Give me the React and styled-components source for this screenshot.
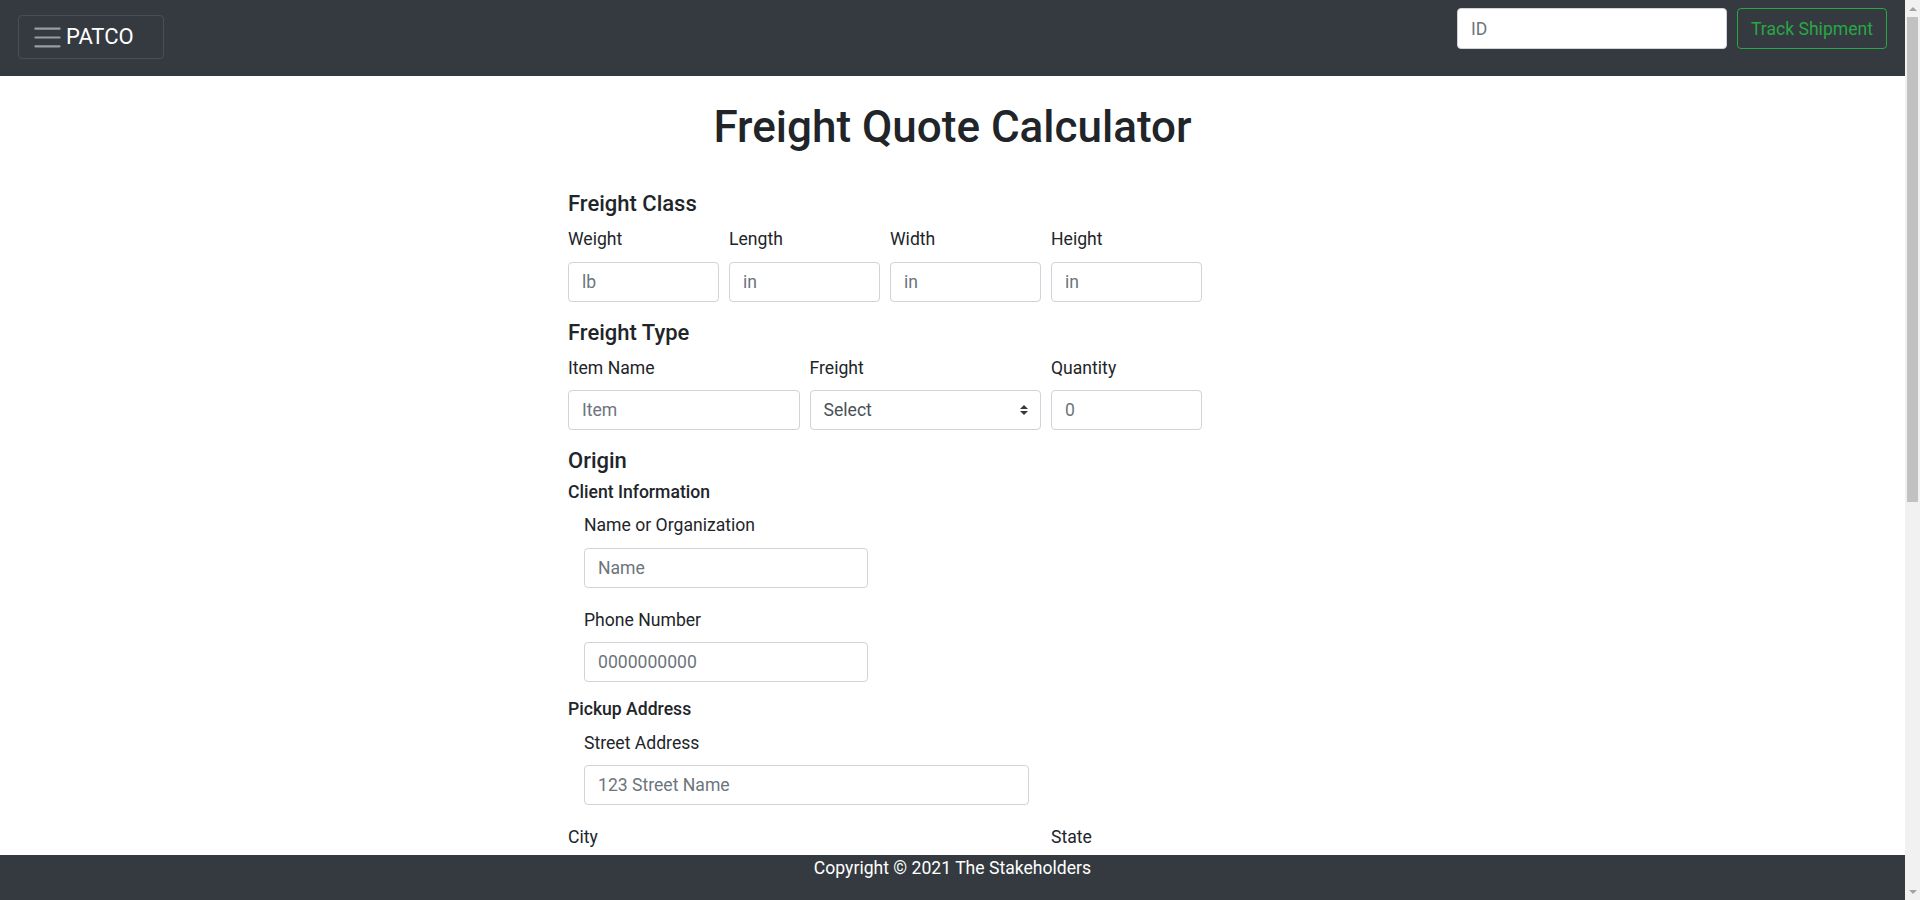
import React from 'react'
import styled, { createGlobalStyle } from 'styled-components'

const GlobalStyle = createGlobalStyle`
  body {
    margin: 0;
    font-family: Roboto, "Liberation Sans", sans-serif;
    font-size: 17.6px;
    line-height: 1.5;
    color: #212529;
    background: #fff;
  }
  * { box-sizing: border-box; }
`

const Shell = styled.div`
  display: flex;
  height: 100vh;
  overflow: hidden;
`

// the page scrolls inside this box, the rail beside it shows the bar
const Page = styled.div`
  flex: 1;
  display: flex;
  flex-direction: column;
  overflow-y: auto;
  scrollbar-width: none;
`

const ScrollRail = styled.div`
  display: flex;
  flex-direction: column;
  flex-shrink: 0;
  width: 15px;
  background: #f1f1f1;
`

const RailArrow = styled.div`
  display: flex;
  align-items: center;
  justify-content: center;
  height: 17px;
`

const RailTrack = styled.div`
  flex: 1;
  padding: 0 2px;
`

const Thumb = styled.div`
  height: 485px;
  background: #c1c1c1;
`

const NavBar = styled.header`
  display: flex;
  flex-shrink: 0;
  justify-content: space-between;
  align-items: flex-start;
  height: 76px;
  padding: 0 18px;
  background: #343a40;
`

const Toggler = styled.button`
  display: flex;
  align-items: center;
  margin-top: 15px;
  height: 44px;
  padding: 0 29px 0 12px;
  background: transparent;
  border: 1px solid rgba(255, 255, 255, 0.1);
  border-radius: 4px;
  color: #fff;
  font-family: inherit;
  font-size: 22px;
  line-height: 1;
  cursor: pointer;

  svg {
    margin-right: 2px;
  }
`

const TrackForm = styled.form`
  display: flex;
  gap: 10px;
  margin-top: 8px;
`

const Input = styled.input`
  display: block;
  width: ${p => p.$width || '100%'};
  height: ${p => p.$height || '40px'};
  padding: 0 13px;
  border: 1px solid #ced4da;
  border-radius: 4px;
  background: #fff;
  font-family: inherit;
  font-size: 17.6px;
  color: #495057;

  &::placeholder {
    color: #6c757d;
  }
`

const OutlineButton = styled.button`
  height: 41px;
  padding: 0 13px;
  background: transparent;
  border: 1px solid #28a745;
  border-radius: 4px;
  color: #28a745;
  font-family: inherit;
  font-size: 17.6px;
  cursor: pointer;
`

const Main = styled.main`
  flex: 1 0 auto;
  padding: 25px 0 30px;
`

const Title = styled.h1`
  margin: 0 0 37px;
  font-size: 44px;
  font-weight: 500;
  line-height: 1.2;
  text-align: center;
`

const Form = styled.form`
  width: 634px;
  margin-left: 568px;
`

const SectionTitle = styled.h5`
  margin: 0 0 9px;
  font-size: 22px;
  font-weight: 500;
  line-height: 1.2;
`

const SubTitle = styled.h6`
  margin: 0 0 11px;
  font-size: 17.6px;
  font-weight: 500;
  line-height: 1;
`

const Row = styled.div`
  display: grid;
  grid-template-columns: ${p => p.$cols};
  column-gap: 10px;
`

const Group = styled.div`
  margin-bottom: ${p => (p.$indent ? '19px' : '18px')};
  padding-left: ${p => (p.$indent ? '16px' : '0')};
`

const Label = styled.label`
  display: block;
  margin-bottom: 9px;
`

const SelectWrap = styled.div`
  position: relative;

  svg {
    position: absolute;
    right: 13px;
    top: 15px;
    pointer-events: none;
  }
`

const Select = styled.select`
  display: block;
  width: 100%;
  height: 40px;
  padding: 0 13px;
  border: 1px solid #ced4da;
  border-radius: 4px;
  background: #fff;
  font-family: inherit;
  font-size: 17.6px;
  color: #495057;
  appearance: none;
`

const SubmitButton = styled.button`
  height: 40px;
  padding: 0 14px;
  background: #007bff;
  border: 1px solid #007bff;
  border-radius: 4px;
  color: #fff;
  font-family: inherit;
  font-size: 17.6px;
`

const Footer = styled.footer`
  position: sticky;
  bottom: 0;
  flex-shrink: 0;
  height: 45px;
  background: #343a40;
  color: #fff;
  text-align: center;
`

const Hamburger = () => (
  <svg width="33" height="33" viewBox="0 0 30 30">
    <path
      d="M4 7h22M4 15h22M4 23h22"
      stroke="rgba(255,255,255,0.5)"
      strokeWidth="2"
      strokeLinecap="round"
    />
  </svg>
)

const Arrows = () => (
  <svg width="8" height="10" viewBox="0 0 4 5">
    <path d="M2 0L0 2h4zm0 5L0 3h4z" fill="#343a40" />
  </svg>
)

const Triangle = ({ down }) => (
  <svg width="8" height="4" viewBox="0 0 8 4">
    <path d={down ? 'M0 0h8L4 4z' : 'M4 0l4 4H0z'} fill="#a3a3a3" />
  </svg>
)

const Field = ({ label, placeholder, width, indent }) => (
  <Group $indent={indent}>
    <Label>{label}</Label>
    <Input placeholder={placeholder} $width={width} />
  </Group>
)

const SelectField = ({ label }) => (
  <Group>
    <Label>{label}</Label>
    <SelectWrap>
      <Select defaultValue="">
        <option value="">Select</option>
      </Select>
      <Arrows />
    </SelectWrap>
  </Group>
)

// same block for pickup and delivery side
const Party = ({ title, addressTitle }) => (
  <>
    <SectionTitle>{title}</SectionTitle>
    <SubTitle>Client Information</SubTitle>
    <Field indent label="Name or Organization" placeholder="Name" width="284px" />
    <Field indent label="Phone Number" placeholder="0000000000" width="284px" />
    <SubTitle>{addressTitle}</SubTitle>
    <Field indent label="Street Address" placeholder="123 Street Name" width="445px" />
    <Row $cols="1fr 151px">
      <Field label="City" placeholder="City" />
      <SelectField label="State" />
    </Row>
    <Row $cols="151px">
      <Field label="Zip Code" placeholder="00000" />
    </Row>
  </>
)

export default function App() {
  return (
    <>
      <GlobalStyle />
      <Shell>
        <Page>
          <NavBar>
            <Toggler type="button">
              <Hamburger />
              PATCO
            </Toggler>
            <TrackForm onSubmit={e => e.preventDefault()}>
              <Input placeholder="ID" $width="270px" $height="41px" />
              <OutlineButton type="submit">Track Shipment</OutlineButton>
            </TrackForm>
          </NavBar>

          <Main>
            <Title>Freight Quote Calculator</Title>
            <Form onSubmit={e => e.preventDefault()}>
              <SectionTitle>Freight Class</SectionTitle>
              <Row $cols="repeat(4, 1fr)">
                <Field label="Weight" placeholder="lb" />
                <Field label="Length" placeholder="in" />
                <Field label="Width" placeholder="in" />
                <Field label="Height" placeholder="in" />
              </Row>

              <SectionTitle>Freight Type</SectionTitle>
              <Row $cols="1fr 1fr 151px">
                <Field label="Item Name" placeholder="Item" />
                <SelectField label="Freight" />
                <Field label="Quantity" placeholder="0" />
              </Row>

              <Party title="Origin" addressTitle="Pickup Address" />
              <Party title="Destination" addressTitle="Delivery Address" />

              <SubmitButton type="submit">Calculate Quote</SubmitButton>
            </Form>
          </Main>

          <Footer>Copyright © 2021 The Stakeholders</Footer>
        </Page>

        <ScrollRail>
          <RailArrow><Triangle /></RailArrow>
          <RailTrack><Thumb /></RailTrack>
          <RailArrow><Triangle down /></RailArrow>
        </ScrollRail>
      </Shell>
    </>
  )
}
